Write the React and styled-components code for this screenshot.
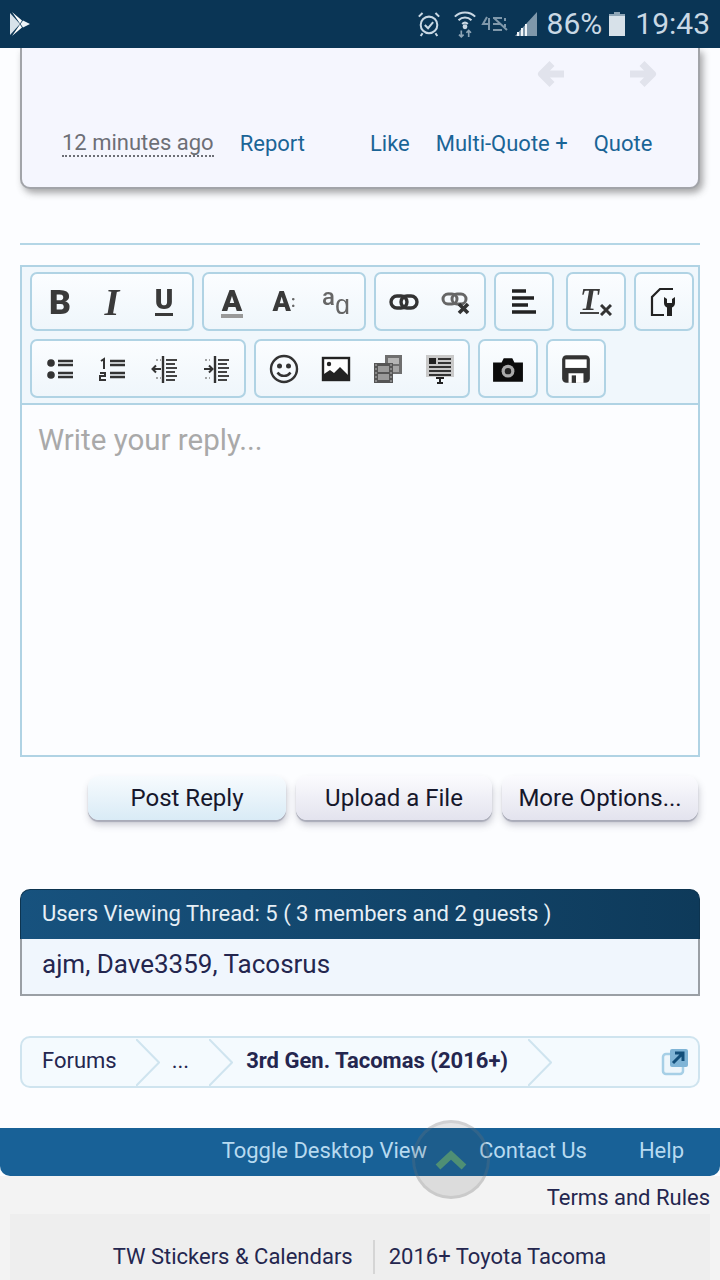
import styled, { createGlobalStyle } from "styled-components";

const GlobalStyle = createGlobalStyle`
  html, body { margin: 0; padding: 0; background: #fcfdff; }
  body { font-family: Roboto, "Liberation Sans", sans-serif; }
  * { box-sizing: border-box; }
`;

const Page = styled.div`
  position: relative;
  width: 720px;
  height: 1280px;
  overflow: hidden;
  display: flex;
  flex-direction: column;
  background: #fcfdff;
`;

const StatusBar = styled.div`
  position: relative;
  z-index: 2;
  height: 48px;
  flex: none;
  background: #0a3555;
  color: #c9d8e4;
  display: flex;
  align-items: center;
  padding: 0 10px 0 8px;
`;

const StatusRight = styled.div`
  margin-left: auto;
  display: flex;
  align-items: center;
`;

const StatusText = styled.span`
  font-size: 30px;
  line-height: 48px;
  margin: ${(p) => p.$margin || 0};
`;

const StatusGap = styled.span`
  width: ${(p) => p.$w}px;
`;

const PostCard = styled.div`
  height: 141px;
  flex: none;
  margin: 0 20px;
  width: 680px;
  background: #f5f6fe;
  border: 2px solid #a2a4a9;
  border-top: 0;
  border-radius: 0 0 10px 10px;
  box-shadow: 3px 4px 7px rgba(60, 60, 60, 0.45);
  display: flex;
  flex-direction: column;
`;

const NavArrows = styled.div`
  display: flex;
  justify-content: flex-end;
  gap: 64px;
  padding: 12px 41px 0 0;
  height: 60px;
`;

const PostActions = styled.div`
  display: flex;
  align-items: center;
  padding: 0 46px 0 40px;
  margin-top: 21px;
  font-size: 22px;
  line-height: 30px;
  white-space: nowrap;
`;

const TimeAgo = styled.span`
  color: #6d6f76;
  border-bottom: 2px dotted #6d6f76;
  line-height: 24px;
  margin-right: 26px;
`;

const ActionLink = styled.a`
  color: #1a6496;
  margin-left: ${(p) => p.$left || 0}px;
`;

const Rule = styled.div`
  margin: 54px 20px 0;
  height: 2px;
  flex: none;
  background: #b4d6e6;
`;

const Editor = styled.div`
  margin: 20px 20px 0;
  width: 680px;
  height: 492px;
  flex: none;
  border: 2px solid #b0d3e4;
  display: flex;
  flex-direction: column;
`;

const Toolbar = styled.div`
  height: 138px;
  flex: none;
  background: #f0f7fc;
  border-bottom: 2px solid #b0d3e4;
  padding: 5px 0 0 8px;
  display: flex;
  flex-direction: column;
  gap: 8px;
`;

const ToolRow = styled.div`
  display: flex;
  gap: 8px;
`;

const ToolGroup = styled.div`
  height: 59px;
  padding: 0 2px;
  margin-left: ${(p) => p.$left || 0}px;
  display: flex;
  border: 2px solid #b0d3e4;
  border-radius: 7px;
  background: linear-gradient(#fbfdff, #eff6fb);
`;

const ToolButton = styled.div`
  width: 52px;
  display: flex;
  align-items: center;
  justify-content: center;
  color: #3a3a3a;
  filter: blur(0.5px);
`;

const Glyph = styled.span`
  font-family: ${(p) => (p.$serif ? '"Liberation Serif", serif' : "Roboto, sans-serif")};
  font-size: ${(p) => p.$size || 28}px;
  font-weight: ${(p) => p.$weight || 900};
  font-style: ${(p) => (p.$italic ? "italic" : "normal")};
  line-height: ${(p) => p.$lh || 28}px;
  color: ${(p) => p.$color || "#3a3a3a"};
  border-bottom: ${(p) => p.$line || "none"};
  padding: 0 ${(p) => p.$pad || 0}px;
  margin: ${(p) => p.$margin || 0};
`;

const WriteArea = styled.div`
  flex: 1;
  background: #fcfdff;
  padding: 17px 16px;
  font-size: 29.5px;
  line-height: 36px;
  color: #a9a9a9;
`;

const FormButtons = styled.div`
  margin-top: 19px;
  padding-right: 22px;
  display: flex;
  justify-content: flex-end;
  gap: 10px;
  flex: none;
`;

const FormButton = styled.button`
  width: ${(p) => (p.$primary ? 198 : 196)}px;
  height: 44px;
  padding: 0;
  border: 0;
  border-radius: 11px;
  font-family: inherit;
  font-size: 24px;
  color: #16172b;
  background: ${(p) =>
    p.$primary
      ? "linear-gradient(#f7fbfe, #d9ebf6)"
      : "linear-gradient(#fbfbfe, #e3e3ee)"};
  box-shadow: 0 2px 1px #a9abb8, 1px 5px 7px rgba(90, 90, 110, 0.3);
`;

const ViewersBox = styled.div`
  margin: 69px 20px 0;
  width: 680px;
  flex: none;
`;

const ViewersHead = styled.div`
  height: 50px;
  padding-left: 21px;
  border-radius: 10px 10px 0 0;
  border: 1px solid #0d3450;
  border-bottom: 0;
  background: linear-gradient(90deg, #17527e, #0e3a5a);
  color: #e6eff6;
  font-size: 22px;
  line-height: 48px;
`;

const ViewersBody = styled.div`
  height: 57px;
  padding-left: 20px;
  background: #f0f6fd;
  border: 2px solid #9a9fa5;
  border-top: 0;
  color: #24264f;
  font-size: 26px;
  line-height: 51px;
`;

const Breadcrumb = styled.div`
  margin: 40px 20px 0;
  width: 680px;
  height: 52px;
  flex: none;
  display: flex;
  align-items: center;
  border: 2px solid #cfe4ef;
  border-radius: 10px;
  background: #f4fafe;
  color: #24264f;
  font-size: 22px;
  line-height: 44px;
`;

const Crumb = styled.span`
  margin: 0 0 2px ${(p) => p.$left}px;
  font-weight: ${(p) => (p.$current ? 700 : 400)};
  white-space: nowrap;
`;

const CrumbArrow = styled.svg`
  flex: none;
  width: 24px;
  height: 47px;
  margin-left: ${(p) => p.$left}px;
`;

const ExternalIcon = styled.svg`
  margin-left: auto;
  margin-right: 9px;
  width: 28px;
  height: 28px;
`;

const FooterBar = styled.div`
  margin-top: 40px;
  height: 48px;
  flex: none;
  background: #186197;
  border-radius: 0 0 10px 10px;
  color: #b7daf0;
  font-size: 22px;
  display: flex;
  justify-content: flex-end;
  align-items: center;
  padding: 0 36px 4px 0;
  gap: 52px;
`;

const Lower = styled.div`
  flex: 1;
  background: #f3f3f3;
  padding: 5px 10px 0;
  color: #24264f;
  font-size: 22px;
`;

const TermsLine = styled.div`
  text-align: right;
  line-height: 33px;
`;

const SiteBox = styled.div`
  height: 70px;
  background: #eeeeee;
  display: flex;
  justify-content: center;
  align-items: flex-start;
  padding: 26px 1px 0 0;
`;

const SiteLink = styled.span`
  line-height: 34px;
  padding: ${(p) => (p.$divided ? "0 0 0 14px" : "0 20px 0 0")};
  border-left: ${(p) => (p.$divided ? "2px solid #d5d5d5" : "0")};
`;

const ScrollTop = styled.div`
  position: absolute;
  left: 412px;
  top: 1120px;
  width: 78px;
  height: 79px;
  border-radius: 50%;
  background: rgba(70, 70, 70, 0.13);
  border: 3px solid rgba(130, 130, 130, 0.2);
  display: flex;
  align-items: center;
  justify-content: center;
`;

const XMark = styled.svg`
  width: 12px;
  height: 12px;
  margin: 16px 0 0 1px;
`;

const Icon = ({ size = 30, children }) => (
  <svg width={size} height={size} viewBox="0 0 30 30" fill="none">
    {children}
  </svg>
);

const NavArrow = ({ flip }) => (
  <svg width="28" height="28" viewBox="0 0 28 28" fill="none" transform={flip ? "scale(-1 1)" : undefined}>
    <path d="M27 14H6M15 3.500L4.500 14 15 24.500" stroke="#e1e3ec" strokeWidth="7" strokeLinejoin="round" />
  </svg>
);

const BulletsIcon = () => (
  <Icon>
    <circle cx="6" cy="9" r="3.800" fill="#333" />
    <circle cx="6" cy="21" r="3.800" fill="#333" />
    <path d="M13 7h15M13 11h15M13 19h15M13 23h15" stroke="#333" strokeWidth="2.400" />
  </Icon>
);

const NumbersIcon = () => (
  <Icon>
    <path d="M4 7l3-2v10M3 19h5v3H3v4h6" stroke="#333" strokeWidth="2" />
    <path d="M13 7h15M13 11h15M13 19h15M13 23h15" stroke="#333" strokeWidth="2.400" />
  </Icon>
);

const OutdentIcon = () => (
  <Icon>
    <path d="M14 2v27" stroke="#333" strokeWidth="2.400" />
    <path d="M17 6h11M17 10h9M17 14h11M17 18h9M17 22h11M17 26h9" stroke="#444" strokeWidth="1.800" />
    <path d="M12 15H4M7 11.500L3.500 15 7 18.500" stroke="#333" strokeWidth="2" />
    <path d="M7 6h2M11 6h1M7 24h2M11 24h1" stroke="#888" strokeWidth="1.600" />
  </Icon>
);

const IndentIcon = () => (
  <Icon>
    <path d="M14 2v27" stroke="#333" strokeWidth="2.400" />
    <path d="M17 6h11M17 10h9M17 14h11M17 18h9M17 22h11M17 26h9" stroke="#444" strokeWidth="1.800" />
    <path d="M3 15h8M8 11.500l3.500 3.500L8 18.500" stroke="#333" strokeWidth="2" />
    <path d="M4 6h2M8 6h1M4 24h2M8 24h1" stroke="#888" strokeWidth="1.600" />
  </Icon>
);

const SmileIcon = () => (
  <Icon>
    <circle cx="15" cy="15" r="13" stroke="#333" strokeWidth="2.400" />
    <circle cx="10.500" cy="12" r="2.500" fill="#333" />
    <circle cx="19.500" cy="12" r="2.500" fill="#333" />
    <path d="M8.500 18.500c3 4.500 10 4.500 13 0" stroke="#333" strokeWidth="2.400" />
  </Icon>
);

const ImageIcon = () => (
  <Icon>
    <rect x="2" y="4" width="26" height="22" fill="#fff" stroke="#222" strokeWidth="2.400" />
    <circle cx="8" cy="10" r="2.200" fill="#222" />
    <path d="M3 25v-5l6-4 4 3 6-6 8 8v4z" fill="#222" />
  </Icon>
);

const FilmIcon = () => (
  <Icon>
    <rect x="12" y="1" width="17" height="19" fill="#6f6f6f" />
    <rect x="15" y="4" width="11" height="6" fill="#b5b5b5" />
    <rect x="15" y="12" width="11" height="6" fill="#a5a5a5" />
    <rect x="1" y="9" width="19" height="20" fill="#555" />
    <rect x="5" y="12" width="11" height="6" fill="#9a9a9a" />
    <rect x="5" y="20" width="11" height="6" fill="#9a9a9a" />
    <path d="M3 10v18M18 10v18" stroke="#aaa" strokeWidth="1.200" strokeDasharray="2 2" />
  </Icon>
);

const TemplateIcon = () => (
  <Icon>
    <rect x="1" y="1" width="28" height="22" fill="#c9c9c9" />
    <rect x="4" y="4" width="7" height="6" fill="#222" />
    <path d="M13 5h13M13 9h13M4 13h22M4 17h22M4 21h22" stroke="#333" strokeWidth="1.800" />
    <path d="M11 24h8M15 24v5M12 29h6" stroke="#222" strokeWidth="2" />
  </Icon>
);

const CameraIcon = () => (
  <Icon size={32}>
    <path d="M1 9h8l2-4h8l2 4h8v18H1z" fill="#0b0b0b" />
    <circle cx="15" cy="17" r="6" fill="#aaa" />
    <circle cx="15" cy="17" r="3" fill="#222" />
  </Icon>
);

const SaveIcon = () => (
  <Icon size={32}>
    <rect x="2" y="2" width="26" height="26" rx="4" fill="#333" />
    <rect x="5" y="6" width="20" height="8" fill="#fff" />
    <rect x="8" y="19" width="14" height="9" fill="#fff" />
    <rect x="11" y="21" width="4" height="7" fill="#333" />
  </Icon>
);

const LinkIcon = () => (
  <Icon>
    <rect x="2" y="9" width="16" height="12" rx="6" stroke="#333" strokeWidth="3.400" />
    <rect x="12" y="9" width="16" height="12" rx="6" stroke="#333" strokeWidth="3.400" />
  </Icon>
);

const UnlinkIcon = () => (
  <Icon>
    <rect x="2" y="7" width="14" height="10" rx="5" stroke="#666" strokeWidth="3" />
    <rect x="11" y="7" width="14" height="10" rx="5" stroke="#666" strokeWidth="3" />
    <path d="M18 17l9 9M27 17l-9 9" stroke="#333" strokeWidth="3.600" />
  </Icon>
);

const AlignIcon = () => (
  <Icon>
    <path d="M3 4h14M3 11h22M3 18h16M3 25h24" stroke="#222" strokeWidth="3.600" />
  </Icon>
);

const SourceIcon = () => (
  <Icon>
    <path d="M24 2H11L3 10v18h12" stroke="#222" strokeWidth="2.200" />
    <path d="M15 10v6a5 5 0 003 4.500V29h5v-8.500a5 5 0 003-4.500v-6l-3 2v4h-5v-4z" fill="#222" />
  </Icon>
);

const PlayIcon = () => (
  <svg width="24" height="26" viewBox="0 0 24 26">
    <path d="M2 2l10 11L2 24z" fill="#d8e2ea" />
    <path d="M4 1l10 8.500-2 3zM4 25l10-8.500-2-3z" fill="#fff" />
    <path d="M15 9.500l7 3.500-7 3.500-2.500-3.500z" fill="#eef3f7" />
  </svg>
);

const AlarmIcon = () => (
  <svg width="24" height="26" viewBox="0 0 26 28" fill="none" stroke="#c9d8e4" strokeWidth="2.200">
    <circle cx="13" cy="15" r="9" />
    <path d="M8.500 15l3.500 3.500 5.500-6.500M2 6l4-4M24 6l-4-4M6 24l-2 3M20 24l2 3" />
  </svg>
);

const WifiIcon = () => (
  <svg width="24" height="30" viewBox="0 0 26 32" fill="none" stroke="#c9d8e4" strokeWidth="2.200">
    <path d="M2 8c6-6 16-6 22 0M6 12c4-4 10-4 14 0M10 16c2-2 4-2 6 0" />
    <circle cx="13" cy="19" r="1.500" fill="#c9d8e4" />
    <path d="M9 23v7M6.500 27.500L9 30l2.500-2.500M17 30v-7M14.500 25.500L17 23l2.500 2.500" stroke="#8ea5b6" strokeWidth="1.800" />
  </svg>
);

const LteIcon = () => (
  <svg width="28" height="16" viewBox="0 0 28 16" fill="none" stroke="#7f98ab" strokeWidth="2">
    <path d="M6 1L2 8h7M8 2v12M12 2h9M12 8h8M12 14h9M24 2v3M24 8v3M13 2l13 12" />
  </svg>
);

const SignalIcon = () => (
  <svg width="24" height="26" viewBox="0 0 24 26">
    <path d="M23 1v24H1z" fill="#7f98ab" />
    <path d="M3 21h2v4H3zM7 17h2v8H7zM11 13h2v12h-2z" fill="#f2f6f9" />
  </svg>
);

const BatteryIcon = () => (
  <svg width="16" height="24" viewBox="0 0 16 24">
    <path d="M5 0h6v2h5v22H0V2h5z" fill="#8ea5b6" />
    <rect y="4" width="16" height="20" fill="#d7e1e9" />
  </svg>
);

const BreadcrumbArrow = ({ left }) => (
  <CrumbArrow $left={left} viewBox="0 0 24 47">
    <path d="M0 0l23 23.500L0 47" fill="none" stroke="#cfe4ef" strokeWidth="2" />
  </CrumbArrow>
);

const App = () => (
  <Page>
    <GlobalStyle />
    <StatusBar>
      <PlayIcon />
      <StatusRight>
        <AlarmIcon />
        <StatusGap $w={12} />
        <WifiIcon />
        <StatusGap $w={4} />
        <LteIcon />
        <StatusGap $w={5} />
        <SignalIcon />
        <StatusText $margin="0 7px 0 9px">86%</StatusText>
        <BatteryIcon />
        <StatusText $margin="0 0 0 10px">19:43</StatusText>
      </StatusRight>
    </StatusBar>

    <PostCard>
      <NavArrows>
        <NavArrow />
        <NavArrow flip />
      </NavArrows>
      <PostActions>
        <TimeAgo>12 minutes ago</TimeAgo>
        <ActionLink>Report</ActionLink>
        <ActionLink $left={65}>Like</ActionLink>
        <ActionLink $left={26}>Multi-Quote +</ActionLink>
        <ActionLink $left={26}>Quote</ActionLink>
      </PostActions>
    </PostCard>

    <Rule />

    <Editor>
      <Toolbar>
        <ToolRow>
          <ToolGroup>
            <ToolButton><Glyph $size={34}>B</Glyph></ToolButton>
            <ToolButton><Glyph $size={38} $serif $italic>I</Glyph></ToolButton>
            <ToolButton><Glyph $size={28} $line="3px solid #3a3a3a" $lh={26}>U</Glyph></ToolButton>
          </ToolGroup>
          <ToolGroup>
            <ToolButton><Glyph $size={30} $line="4px solid #999" $pad={1} $lh={26} $margin="2px 0 0">A</Glyph></ToolButton>
            <ToolButton><Glyph $size={27}>A</Glyph><Glyph $size={16} $weight={700} $color="#666">:</Glyph></ToolButton>
            <ToolButton>
              <Glyph $size={24} $weight={500} $color="#666" $margin="0 0 9px">a</Glyph>
              <Glyph $size={27} $weight={500} $color="#666" $margin="7px 0 0">ɑ</Glyph>
            </ToolButton>
          </ToolGroup>
          <ToolGroup>
            <ToolButton><LinkIcon /></ToolButton>
            <ToolButton><UnlinkIcon /></ToolButton>
          </ToolGroup>
          <ToolGroup>
            <ToolButton><AlignIcon /></ToolButton>
          </ToolGroup>
          <ToolGroup $left={4}>
            <ToolButton>
              <Glyph $size={31} $serif $italic $line="2px solid #444" $lh={24} $margin="0 0 2px">T</Glyph>
              <XMark viewBox="0 0 12 12">
                <path d="M1 1l10 10M11 1L1 11" stroke="#333" strokeWidth="3" />
              </XMark>
            </ToolButton>
          </ToolGroup>
          <ToolGroup>
            <ToolButton><SourceIcon /></ToolButton>
          </ToolGroup>
        </ToolRow>
        <ToolRow>
          <ToolGroup>
            <ToolButton><BulletsIcon /></ToolButton>
            <ToolButton><NumbersIcon /></ToolButton>
            <ToolButton><OutdentIcon /></ToolButton>
            <ToolButton><IndentIcon /></ToolButton>
          </ToolGroup>
          <ToolGroup>
            <ToolButton><SmileIcon /></ToolButton>
            <ToolButton><ImageIcon /></ToolButton>
            <ToolButton><FilmIcon /></ToolButton>
            <ToolButton><TemplateIcon /></ToolButton>
          </ToolGroup>
          <ToolGroup>
            <ToolButton><CameraIcon /></ToolButton>
          </ToolGroup>
          <ToolGroup>
            <ToolButton><SaveIcon /></ToolButton>
          </ToolGroup>
        </ToolRow>
      </Toolbar>
      <WriteArea>Write your reply...</WriteArea>
    </Editor>

    <FormButtons>
      <FormButton $primary>Post Reply</FormButton>
      <FormButton>Upload a File</FormButton>
      <FormButton>More Options...</FormButton>
    </FormButtons>

    <ViewersBox>
      <ViewersHead>Users Viewing Thread: 5 ( 3 members and 2 guests )</ViewersHead>
      <ViewersBody>ajm, Dave3359, Tacosrus</ViewersBody>
    </ViewersBox>

    <Breadcrumb>
      <Crumb $left={20}>Forums</Crumb>
      <BreadcrumbArrow left={19} />
      <Crumb $left={12}>...</Crumb>
      <BreadcrumbArrow left={20} />
      <Crumb $left={13} $current>3rd Gen. Tacomas (2016+)</Crumb>
      <BreadcrumbArrow left={20} />
      <ExternalIcon viewBox="0 0 28 28">
        <rect x="2" y="6" width="20" height="20" rx="3" fill="#eef6fb" stroke="#a6cfe6" strokeWidth="2.500" />
        <rect x="9" y="1" width="18" height="18" rx="2" fill="#7fb4d6" />
        <path d="M12 15l9-9M14 5h8v8" stroke="#134f7a" strokeWidth="3" fill="none" />
      </ExternalIcon>
    </Breadcrumb>

    <FooterBar>
      <span>Toggle Desktop View</span>
      <span>Contact Us</span>
      <span>Help</span>
    </FooterBar>

    <Lower>
      <TermsLine>Terms and Rules</TermsLine>
      <SiteBox>
        <SiteLink>TW Stickers &amp; Calendars</SiteLink>
        <SiteLink $divided>2016+ Toyota Tacoma</SiteLink>
      </SiteBox>
    </Lower>

    <ScrollTop>
      <svg width="34" height="24" viewBox="0 0 34 24">
        <path d="M4 19L17 7l13 12" fill="none" stroke="#4f8f74" strokeWidth="7" />
      </svg>
    </ScrollTop>
  </Page>
);

export default App;
